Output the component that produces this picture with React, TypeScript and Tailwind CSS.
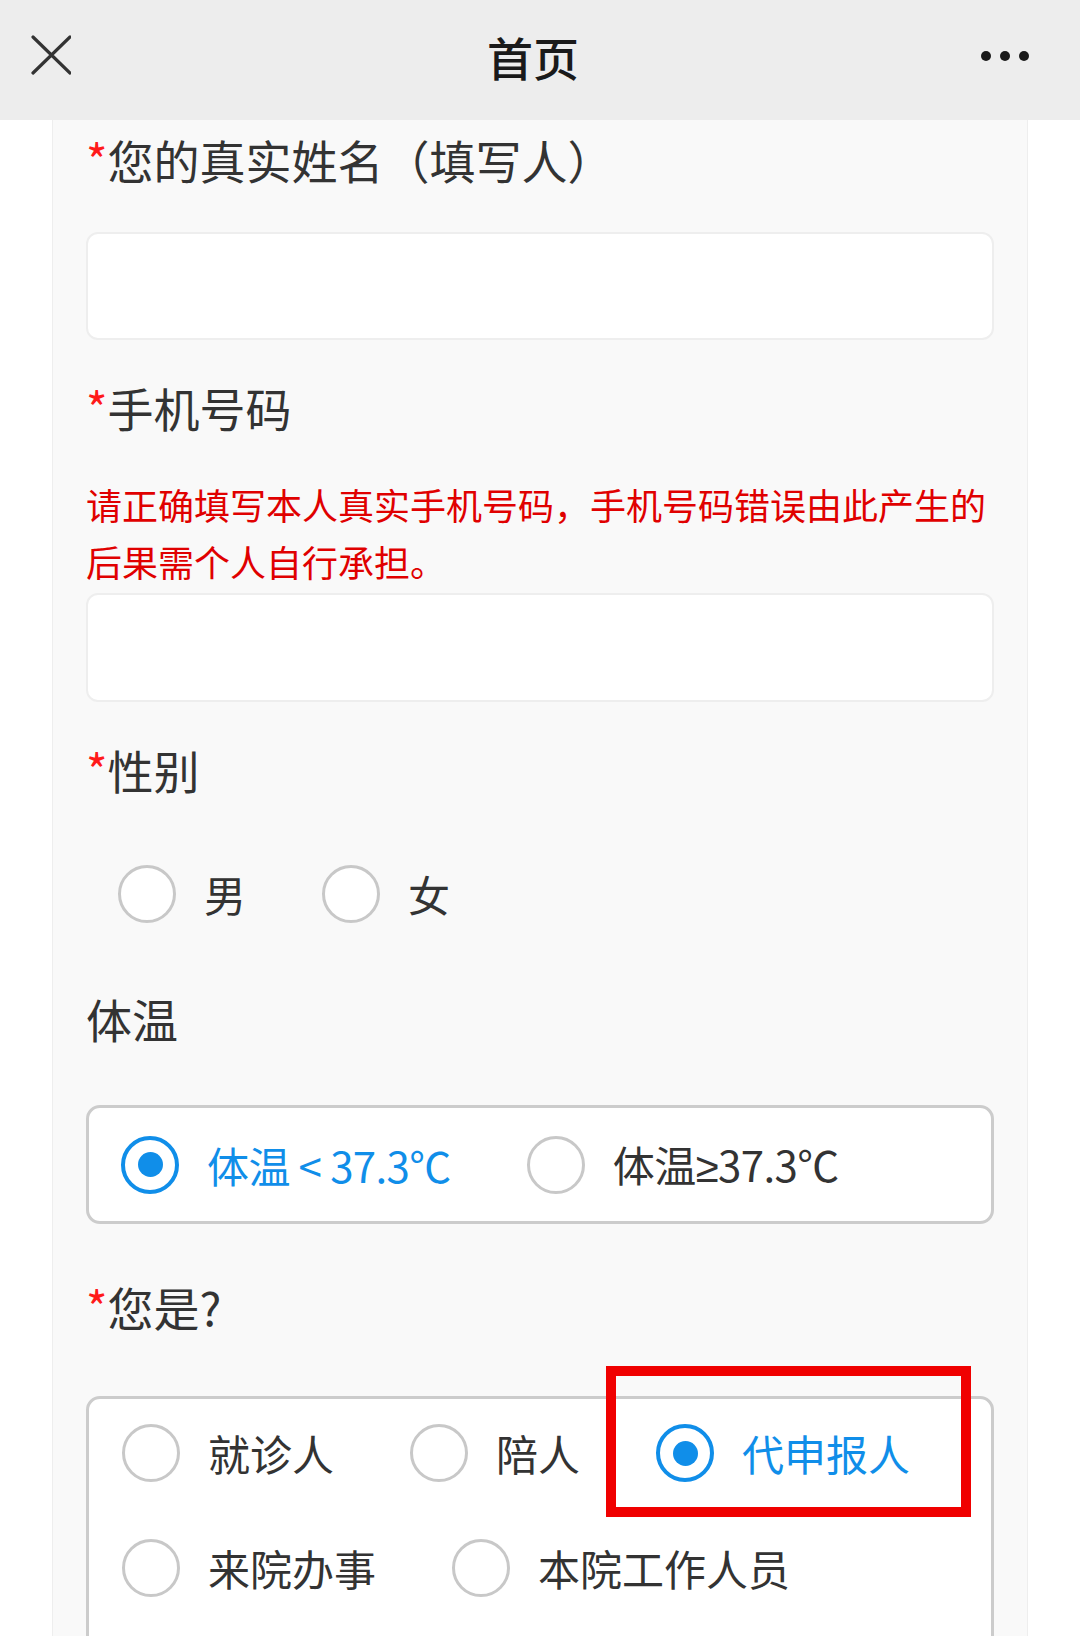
import React from "react";

const FONT = { fontFamily: '"Noto Sans CJK SC", "Noto Sans", sans-serif' };

function Radio({ checked = false }: { checked?: boolean }) {
  return checked ? (
    <span className="flex h-[58px] w-[58px] shrink-0 items-center justify-center rounded-full border-[4px] border-[#108ee9] bg-white">
      <span className="h-[25px] w-[25px] rounded-full bg-[#108ee9]" />
    </span>
  ) : (
    <span className="h-[58px] w-[58px] shrink-0 rounded-full border-[3px] border-[#c8c8c8] bg-white" />
  );
}

function Option({
  label,
  checked = false,
  tight = false,
}: {
  label: React.ReactNode;
  checked?: boolean;
  tight?: boolean;
}) {
  return (
    <label className="mr-[76px] flex h-[60px] items-center">
      <Radio checked={checked} />
      <span
        className={`ml-[28px] whitespace-nowrap text-[42px] leading-[60px] ${
          checked ? "text-[#108ee9]" : "text-[#333333]"
        } ${tight ? "tracking-[-0.6px]" : ""}`}
      >
        {label}
      </span>
    </label>
  );
}

function Label({ text, required = false }: { text: string; required?: boolean }) {
  return (
    <div className="flex h-[60px] items-center pb-[6px] text-[46px] leading-[54px] text-[#333333]">
      {required && <span className="text-[#ff1a1a]">*</span>}
      <span>{text}</span>
    </div>
  );
}

export default function App() {
  return (
    <div className="relative h-[1636px] w-[1080px] overflow-hidden bg-white" style={FONT}>
      {/* Top bar */}
      <div className="flex h-[120px] items-start bg-[#ededed]">
        <div className="w-[110px] pl-[31px] pt-[35px]">
          <svg width="40" height="40" viewBox="0 0 40 40" fill="none">
            <path d="M2 2L39 38M39 2L2 38" stroke="#333" strokeWidth="3.2" strokeLinecap="round" />
          </svg>
        </div>
        <div className="flex h-[112px] flex-1 items-center justify-center text-[46px] font-medium text-[#1a1a1a]">
          首页
        </div>
        <div className="flex w-[124px] items-center gap-[9px] pl-[25px] pt-[51px]">
          <span className="h-[10px] w-[10px] rounded-full bg-[#1a1a1a]" />
          <span className="h-[10px] w-[10px] rounded-full bg-[#1a1a1a]" />
          <span className="h-[10px] w-[10px] rounded-full bg-[#1a1a1a]" />
        </div>
      </div>

      {/* Form card */}
      <div className="ml-[52px] flex w-[976px] flex-col border-x border-[#eeeeee] bg-[#f9f9f9] px-[33px] pt-[12px]">
        <Label text="您的真实姓名（填写人）" required />
        <div className="mt-[40px] h-[108px] rounded-[12px] border-2 border-[#eeeeee] bg-white" />

        <div className="mt-[40px]">
          <Label text="手机号码" required />
        </div>
        <p className="mt-[36px] text-[36px] leading-[57px] text-[#e00000]">
          请正确填写本人真实手机号码，手机号码错误由此产生的后果需个人自行承担。
        </p>
        <div className="mt-[3px] h-[109px] rounded-[12px] border-2 border-[#eeeeee] bg-white" />

        <div className="mt-[40px]">
          <Label text="性别" required />
        </div>
        <div className="mt-[62px] flex pl-[32px]">
          <Option label="男" />
          <Option label="女" />
        </div>

        <div className="mt-[67px]">
          <Label text="体温" />
        </div>
        <div className="mt-[54px] flex h-[119px] items-center rounded-[14px] border-[3px] border-[#cccccc] bg-white pl-[32px]">
          <Option label="体温 < 37.3℃" checked tight />
          <Option
            tight
            label={
              <>
                体温
                <span style={{ fontFamily: '"Noto Sans", sans-serif' }}>≥</span>
                37.3℃
              </>
            }
          />
        </div>

        <div className="mt-[55px]">
          <Label text="您是?" required />
        </div>
        <div className="mt-[57px] flex flex-wrap gap-y-[55px] rounded-[14px] border-[3px] border-[#cccccc] bg-white pb-[80px] pl-[33px] pt-[24px]">
          <Option label="就诊人" />
          <Option label="陪人" />
          <Option label="代申报人" checked />
          <Option label="来院办事" />
          <Option label="本院工作人员" />
        </div>
      </div>

      {/* Annotation box drawn over the screenshot */}
      <div className="absolute left-[606px] top-[1366px] h-[151px] w-[365px] border-[10px] border-[#f00000]" />
    </div>
  );
}
